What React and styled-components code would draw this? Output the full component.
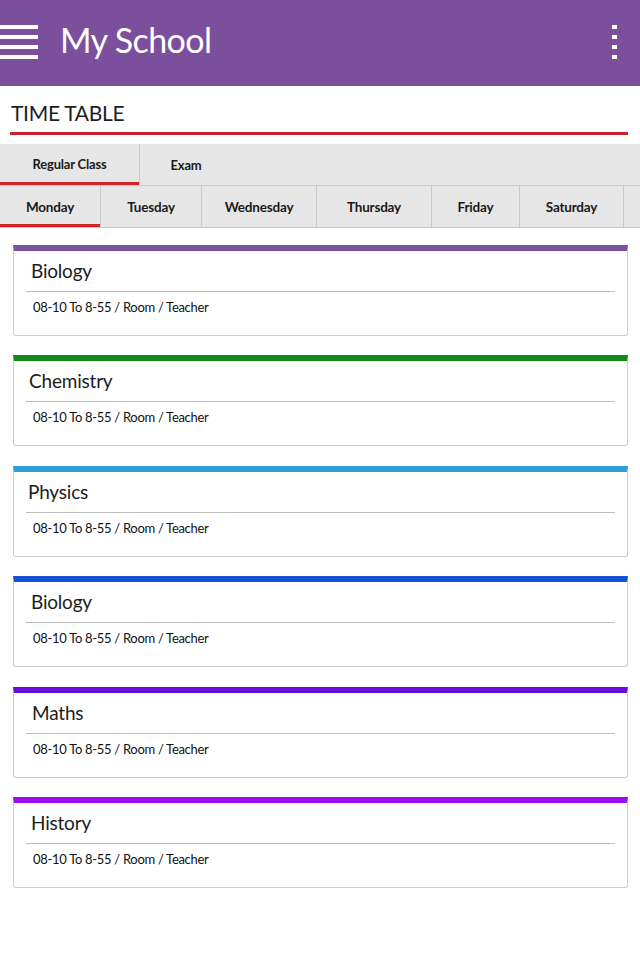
import React from "react";
import styled, { createGlobalStyle } from "styled-components";

const GlobalStyle = createGlobalStyle`
  html, body {
    margin: 0;
    padding: 0;
    background: #ffffff;
    font-family: "Lato", "Noto Sans", sans-serif;
  }
`;

const Page = styled.div`
  width: 640px;
  min-height: 960px;
  background: #ffffff;
`;

const AppBar = styled.header`
  height: 86px;
  box-sizing: border-box;
  padding-bottom: 4px;
  background: #7b4f9c;
  display: flex;
  align-items: center;
  color: #ffffff;
`;

const MenuButton = styled.div`
  width: 38px;
  display: flex;
  flex-direction: column;
  gap: 6px;
  margin-top: 2px;
`;

const MenuBar = styled.span`
  display: block;
  height: 4px;
  background: #ffffff;
`;

const AppTitle = styled.h1`
  margin: -4px 0 0 22px;
  font-size: 34px;
  font-weight: 400;
  letter-spacing: -0.6px;
  flex: 1;
`;

const MoreButton = styled.div`
  display: flex;
  flex-direction: column;
  gap: 6px;
  margin-right: 23px;
  margin-top: 2px;
`;

const Dot = styled.span`
  display: block;
  width: 5px;
  height: 4px;
  background: #ffffff;
`;

const Section = styled.div`
  padding: 12px 12px 0 10px;
`;

const SectionTitle = styled.h2`
  margin: 0 0 0 1px;
  font-size: 21px;
  font-weight: 400;
  color: #1e1e1e;
  line-height: 30px;
  letter-spacing: -0.3px;
`;

const RedRule = styled.div`
  height: 3px;
  background: #c5252b;
  margin-top: 4px;
`;

const TabBar = styled.div`
  margin-top: ${(p) => (p.$first ? 9 : 0)}px;
  background: #e6e6e6;
  display: flex;
  height: 41px;
  border-bottom: 1px solid #c9c9c9;
  overflow: hidden;
`;

const Tab = styled.div`
  width: ${(p) => p.$w}px;
  flex: none;
  box-sizing: border-box;
  display: flex;
  align-items: center;
  justify-content: center;
  font-size: ${(p) => p.$size || 13}px;
  font-weight: 700;
  color: #1a1a1a;
  border-right: ${(p) => (p.$line ? "1px solid #c9c9c9" : "none")};
  box-shadow: ${(p) => (p.$active ? "inset 0 -3px 0 #d2232a" : "none")};
  padding-bottom: ${(p) => p.$pb || 0}px;
  letter-spacing: -0.2px;
`;

const CardList = styled.div`
  padding: 17px 12px 0 13px;
  display: flex;
  flex-direction: column;
  gap: 19.4px;
`;

const Card = styled.div`
  height: 91px;
  box-sizing: border-box;
  border: 1px solid #cccccc;
  border-top: 6px solid ${(p) => p.$color};
  border-radius: 0 0 3px 3px;
  padding: 0 12px;
`;

const CardTitle = styled.div`
  font-size: 19px;
  color: #1c1c1c;
  height: 40px;
  line-height: 40px;
  padding-left: ${(p) => p.$indent}px;
  border-bottom: 1px solid #bdbdbd;
  letter-spacing: -0.2px;
`;

const CardInfo = styled.div`
  font-size: 13px;
  color: #111111;
  line-height: 30px;
  padding-left: 7px;
  letter-spacing: -0.3px;
`;

const days = [
  { name: "Monday", w: 101 },
  { name: "Tuesday", w: 101 },
  { name: "Wednesday", w: 115 },
  { name: "Thursday", w: 115 },
  { name: "Friday", w: 88 },
  { name: "Saturday", w: 104 },
];

const classes = [
  { subject: "Biology", color: "#7b52a0", indent: 5 },
  { subject: "Chemistry", color: "#118a18", indent: 3 },
  { subject: "Physics", color: "#2b9fd6", indent: 2 },
  { subject: "Biology", color: "#1352d2", indent: 5 },
  { subject: "Maths", color: "#6a0be0", indent: 6 },
  { subject: "History", color: "#9c0ff0", indent: 5 },
];

export default function App() {
  return (
    <Page>
      <GlobalStyle />
      <AppBar>
        <MenuButton>
          <MenuBar />
          <MenuBar />
          <MenuBar />
          <MenuBar />
        </MenuButton>
        <AppTitle>My School</AppTitle>
        <MoreButton>
          <Dot />
          <Dot />
          <Dot />
          <Dot />
        </MoreButton>
      </AppBar>

      <Section>
        <SectionTitle>TIME TABLE</SectionTitle>
        <RedRule />
      </Section>

      <TabBar $first>
        <Tab $w={140} $line $active $pb={2}>
          Regular Class
        </Tab>
        <Tab $w={92}>Exam</Tab>
      </TabBar>
      <TabBar>
        {days.map((d, i) => (
          <Tab key={d.name} $w={d.w} $line $active={i === 0} $size={13.5}>
            {d.name}
          </Tab>
        ))}
      </TabBar>

      <CardList>
        {classes.map((c, i) => (
          <Card key={i} $color={c.color}>
            <CardTitle $indent={c.indent}>{c.subject}</CardTitle>
            <CardInfo>08-10 To 8-55 / Room / Teacher</CardInfo>
          </Card>
        ))}
      </CardList>
    </Page>
  );
}
